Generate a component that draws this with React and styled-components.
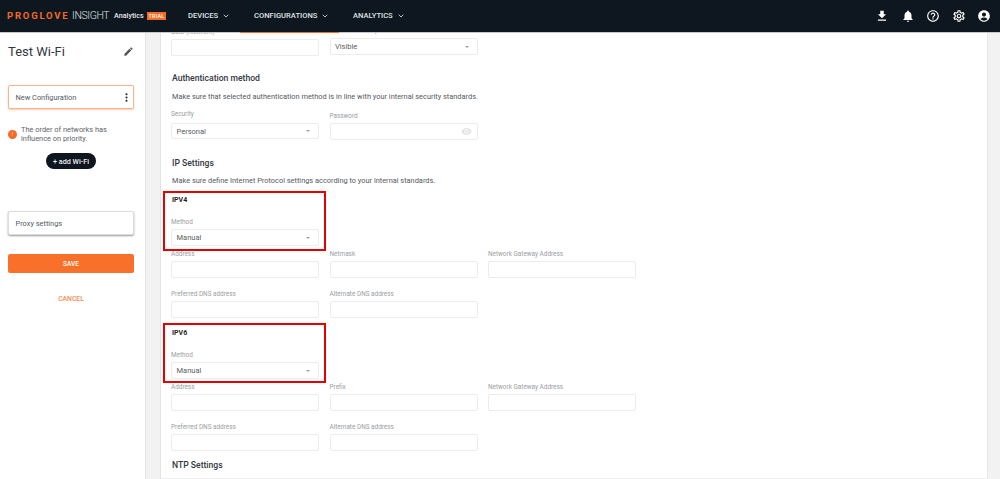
import React from "react";
import styled, { createGlobalStyle } from "styled-components";
import { ChevronDown } from "lucide-react";
import { MdNotifications, MdAccountCircle, MdEdit, MdVisibility, MdFileDownload, MdMoreVert, MdOutlineSettings, MdHelpOutline } from "react-icons/md";

const Global = createGlobalStyle`
  html, body { margin: 0; padding: 0; height: 100%; overflow: hidden; background: #fff; }
  body { font-family: Roboto, "Liberation Sans", sans-serif; color: #3a3f44; }
  * { box-sizing: border-box; }
`;

const Page = styled.div`
  width: 1000px; height: 479px; display: flex; flex-direction: column; overflow: hidden;
`;
const TopBar = styled.header`
  height: 32px; flex: none; background: #0e1720; display: flex; align-items: center;
  padding: 0 9px 1px 7px; color: #fff; position: relative; z-index: 2;
  box-shadow: 0 1px 0 #c4c8cb;
`;
const Brand = styled.span`
  font-size: 9.5px; font-weight: 700; letter-spacing: 1.8px; color: #f36b24; width: 65px; white-space: nowrap;
`;
const Insight = styled.span`
  font-size: 10.5px; font-weight: 300; letter-spacing: -.4px; color: #dfe2e4; width: 42px;
`;
const Analytics = styled.span`
  font-size: 7.2px; font-weight: 500; color: #e8eaeb; width: 33px;
`;
const Trial = styled.span`
  background: #f36b24; color: #fff; font-size: 5.5px; font-weight: 500; letter-spacing: .2px;
  width: 19px; height: 8px; line-height: 8px; text-align: center;
`;
const Nav = styled.nav`
  display: flex; margin-left: 22px;
`;
const NavItem = styled.span`
  display: flex; align-items: center; gap: 4px; font-size: 7.6px; font-weight: 500; color: #dfe2e4;
  width: ${p => p.$w}px; white-space: nowrap;
`;
const Icons = styled.div`
  margin-left: auto; display: flex; align-items: center; gap: 11.4px; color: #fff;
`;
const Body = styled.div`
  flex: 1; display: flex; min-height: 0;
`;
const Sidebar = styled.aside`
  width: 146px; flex: none; background: #fff; padding: 0 11px 0 8px; display: flex; flex-direction: column;
  border-right: 1px solid #e4e4e4;
`;
const TitleRow = styled.div`
  display: flex; align-items: center; justify-content: space-between; height: 16px; margin-top: 11px;
`;
const Title = styled.h1`
  margin: 0; font-size: 13px; font-weight: 400; color: #33383d; white-space: nowrap;
`;
const Card = styled.div`
  height: 24px; background: #fff; border-radius: 2px; display: flex; align-items: center; justify-content: space-between;
  padding-left: 6.5px; font-size: 7.4px; color: #555a5f; margin-top: ${p => p.$mt}px;
  border: 1px solid ${p => (p.$active ? "#f7b48f" : "#ddd")};
  box-shadow: ${p => (p.$active ? "0 1px 2px rgba(243,107,36,.35)" : "0 1px 2px rgba(0,0,0,.4)")};
`;
const Note = styled.div`
  display: flex; align-items: center; gap: 4px; margin-top: 16px; font-size: 7.4px; line-height: 9px; color: #5e6367;
`;
const Bang = styled.span`
  width: 9px; height: 9px; border-radius: 50%; background: #f36b24; color: #fff; font-size: 5px;
  display: flex; align-items: center; justify-content: center; flex: none; margin-top: 1px;
`;
const AddWifi = styled.button`
  align-self: center; margin-top: 10px; height: 16px; width: 50px; border: 0; padding: 0; border-radius: 8px; background: #0e1720;
  color: #f0f0f0; font: 500 7.2px Roboto, sans-serif;
`;
const Save = styled.button`
  margin-top: 19px; height: 19px; border: 0; border-radius: 2px; background: #f9702b; color: #fff;
  font: 500 6.5px Roboto, sans-serif; letter-spacing: .1px;
`;
const Cancel = styled.button`
  margin-top: 21px; height: 10px; padding: 0; border: 0; background: none; color: #f98d55;
  font: 500 6.8px Roboto, sans-serif;
`;
const Gutter = styled.div`
  width: 15px; flex: none; background: #f2f2f2; border-right: 1px solid #e4e4e4;
`;
const Main = styled.main`
  width: 826px; flex: none; background: #fff; overflow: hidden; padding-left: 10px; position: relative;
  border-bottom: 1px solid #eeeeee;
`;
const ScrollRail = styled.div`
  flex: 1; background: #f2f2f2; border-left: 1px solid #e8e8e8;
`;
const TabMark = styled.span`
  position: absolute; left: 79px; top: 0; width: 99px; height: 1px; background: #f36b24; z-index: 3;
`;
const Scrolled = styled.div`
  margin-top: -6px;
`;
const Row = styled.div`
  display: flex; gap: 10.5px; margin-top: ${p => p.$mt || 0}px;
`;
const Field = styled.div`
  width: 148px; flex: none; padding-top: ${p => p.$pt || 0}px;
`;
const Label = styled.div`
  font-size: 6.4px; line-height: 8px; height: 8px; color: #9a9ea2; margin-bottom: ${p => p.$gap ?? 3}px; white-space: nowrap;
`;
const Input = styled.div`
  height: ${p => p.$h || 17}px; border: 1px solid #ececec; border-radius: 2px; background: #fff; display: flex; align-items: center;
  justify-content: space-between; padding: 0 5px 0 4.5px; font-size: 7.5px; color: #5a5e62;
`;
const Caret = styled.span`
  width: 0; height: 0; border-left: 2.5px solid transparent; border-right: 2.5px solid transparent;
  border-top: 2.5px solid #a0a0a0; margin-right: 3px;
`;
const H2 = styled.h2`
  margin: ${p => p.$mt}px 0 0 1px; font-size: 8.6px; line-height: 11px; font-weight: 500; color: #33383d;
`;
const Desc = styled.p`
  margin: ${p => p.$mt}px 0 0 1px; font-size: 7.4px; line-height: 10px; color: #54595e; white-space: nowrap;
`;
const Boxed = styled.section`
  width: 163px; height: 60px; margin: 5px 0 0 -8px; padding-left: 6px; border: 2px solid #e60000;
  display: flex; flex-direction: column;
`;
const H3 = styled.h3`
  margin: ${p => p.$mt}px 0 0 1px; font-size: 7px; line-height: 9px; font-weight: 700; color: #1f2428;
`;

const Select = ({ value, h }) => (
  <Input $h={h}>{value}<Caret /></Input>
);
const F = ({ label, pt, gap, children }) => (
  <Field $pt={pt}>
    <Label $gap={gap}>{label}</Label>
    {children || <Input />}
  </Field>
);

const IpBlock = ({ name, mid, headMt, methodPt, rowMt }) => (
  <>
    <Boxed>
      <H3 $mt={headMt}>{name}</H3>
      <F label="Method" pt={methodPt}><Select value="Manual" /></F>
    </Boxed>
    <Row $mt={rowMt}>
      <F label="Address" />
      <F label={mid} />
      <F label="Network Gateway Address" />
    </Row>
    <Row $mt={12}>
      <F label="Preferred DNS address" />
      <F label="Alternate DNS address" />
    </Row>
  </>
);

export default function App() {
  return (
    <Page>
      <Global />
      <TopBar>
        <Brand>PROGLOVE</Brand>
        <Insight>INSIGHT</Insight>
        <Analytics>Analytics</Analytics>
        <Trial>TRIAL</Trial>
        <Nav>
          <NavItem $w={66}>DEVICES <ChevronDown size={8} strokeWidth={2.5} /></NavItem>
          <NavItem $w={99}>CONFIGURATIONS <ChevronDown size={8} strokeWidth={2.5} /></NavItem>
          <NavItem $w={60}>ANALYTICS <ChevronDown size={8} strokeWidth={2.5} /></NavItem>
        </Nav>
        <Icons>
          <MdFileDownload size={14} />
          <MdNotifications size={14} />
          <MdHelpOutline size={14} />
          <MdOutlineSettings size={14} />
          <MdAccountCircle size={14} />
        </Icons>
      </TopBar>
      <Body>
        <Sidebar>
          <TitleRow>
            <Title>Test Wi-Fi</Title>
            <MdEdit size={11} color="#555" />
          </TitleRow>
          <Card $active $mt={26}>New Configuration<MdMoreVert size={13} color="#33383d" /></Card>
          <Note>
            <Bang>!</Bang>
            <span>The order of networks has influence on priority.</span>
          </Note>
          <AddWifi>+ add Wi-Fi</AddWifi>
          <Card $mt={42}>Proxy settings</Card>
          <Save>SAVE</Save>
          <Cancel>CANCEL</Cancel>
        </Sidebar>
        <Gutter />
        <Main>
          <TabMark />
          <Scrolled>
            <Row>
              <F label="SSID (Network)" pt={2} />
              <F label="Network visibility" gap={4}><Select value="Visible" /></F>
            </Row>
            <H2 $mt={17}>Authentication method</H2>
            <Desc $mt={8}>Make sure that selected authentication method is in line with your internal security standards.</Desc>
            <Row $mt={8}>
              <F label="Security" gap={5}><Select value="Personal" h={16} /></F>
              <F label="Password" pt={2}>
                <Input><span /><MdVisibility size={11} color="#e3e3e3" /></Input>
              </F>
            </Row>
            <H2 $mt={18}>IP Settings</H2>
            <Desc $mt={7}>Make sure define Internet Protocol settings according to your internal standards.</Desc>
            <IpBlock name="IPV4" mid="Netmask" headMt={3} methodPt={13} rowMt={-1} />
            <IpBlock name="IPV6" mid="Prefix" headMt={4} methodPt={13} rowMt={0} />
            <H2 $mt={9}>NTP Settings</H2>
          </Scrolled>
        </Main>
        <ScrollRail />
      </Body>
    </Page>
  );
}
